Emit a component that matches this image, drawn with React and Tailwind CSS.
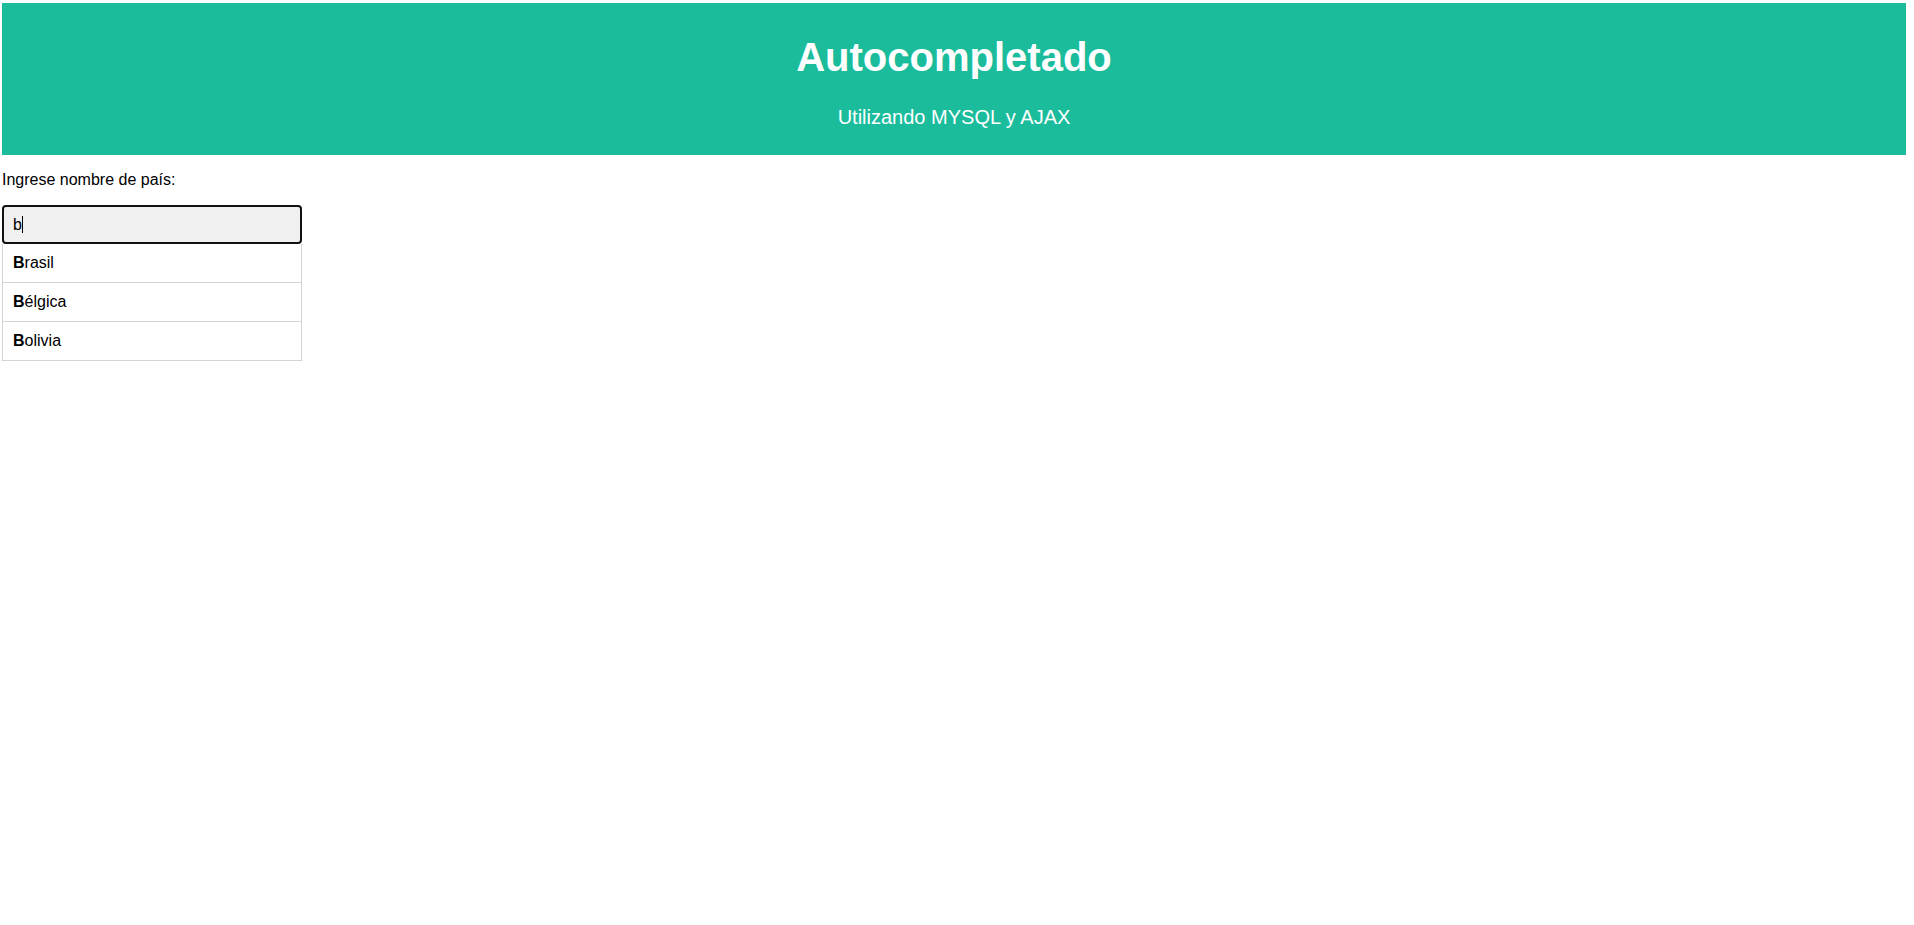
const paises = ['Brasil', 'Bélgica', 'Bolivia'];

const App = () => {
  const query = 'b';

  return (
    <div className="min-h-screen bg-white pt-[3px] pl-[2px] font-['Arial','Liberation_Sans',sans-serif] text-black">
      {/* Header */}
      <header className="w-[1904px] h-[152px] bg-[#1abc9c] text-white text-center pt-[31px]">
        <h1 className="text-[40px] leading-[46px] font-bold">Autocompletado</h1>
        <p className="text-[20px] leading-[23px] mt-[26px]">Utilizando MYSQL y AJAX</p>
      </header>

      <label className="block mt-[16px] text-[16px] leading-[18px]">Ingrese nombre de país:</label>

      {/* Input */}
      <div className="mt-[16px] w-[300px] h-[39px] border-2 border-[#111] rounded-[4px] bg-[#f0f0f0] px-[9px] flex items-center text-[16px]">
        <span>{query}</span>
        <span className="w-px h-[17px] bg-black" />
      </div>

      {/* Suggestions */}
      <ul className="w-[300px] border-x border-[#d4d4d4]">
        {paises.map(p => (
          <li key={p} className="h-[39px] border-b border-[#d4d4d4] px-[10px] flex items-center text-[16px]">
            <span className="font-bold">{p.charAt(0)}</span>
            <span>{p.slice(1)}</span>
          </li>
        ))}
      </ul>
    </div>
  );
};

export default App;
